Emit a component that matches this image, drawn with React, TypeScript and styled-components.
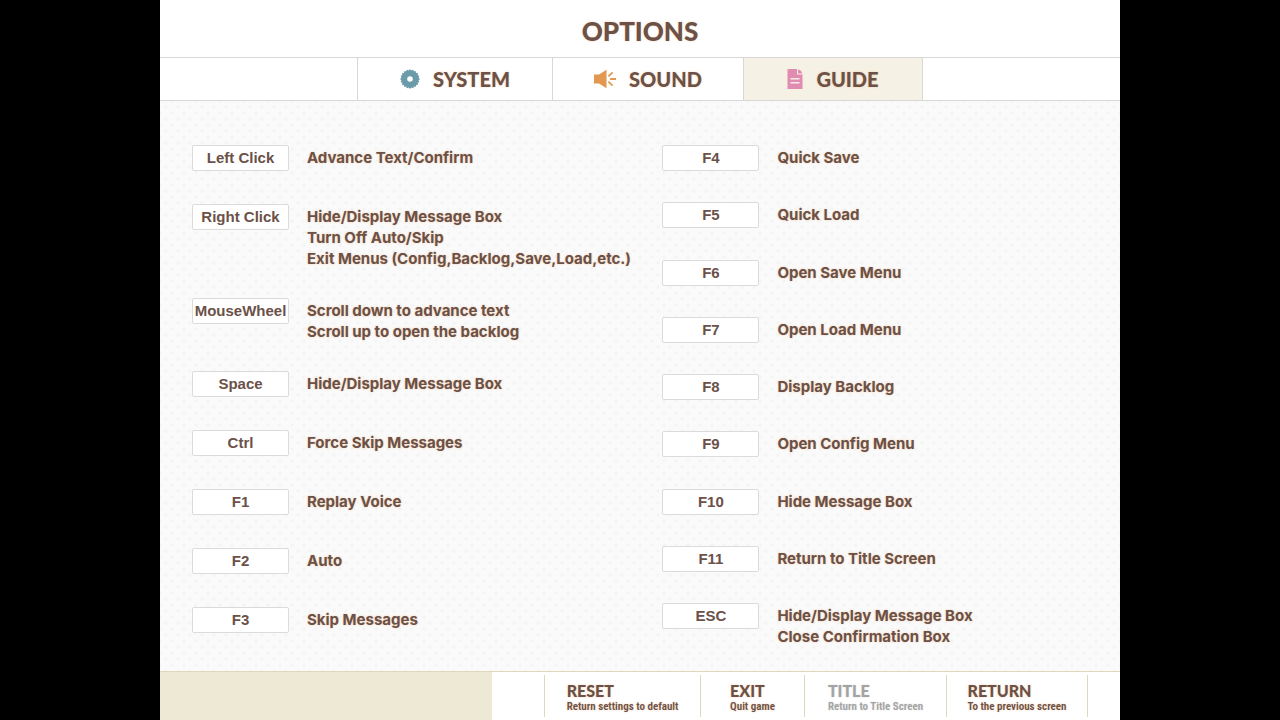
import React from "react";
import styled, { createGlobalStyle } from "styled-components";

const GlobalStyle = createGlobalStyle`
  *, *::before, *::after { box-sizing: border-box; }
  html, body { margin: 0; background: #000; }
  button { font: inherit; color: inherit; cursor: pointer; }
`;

const ink = "#6b5148";
const glow = "0 0 2px rgba(240, 170, 110, 0.6)";
const heading = `"Lato Black", Lato, "Open Sans", sans-serif`;

const Screen = styled.div`
  display: flex;
  flex-direction: column;
  width: 75%;
  min-height: 100vh;
  margin: 0 auto;
  background: #fff;
  color: ${ink};
`;

const Header = styled.header`
  display: flex;
  justify-content: center;
  padding: 16px 0 11px;
  border-bottom: 1px solid #d9d8d6;
`;

const PageTitle = styled.h1`
  margin: 0;
  font: 900 26px/30px ${heading};
  text-shadow: ${glow};
`;

const Tabs = styled.nav`
  display: flex;
  justify-content: center;
  border-bottom: 1px solid #d9d8d6;
`;

const Tab = styled.button<{ $width: number; $active?: boolean }>`
  display: flex;
  align-items: center;
  justify-content: center;
  gap: 13px;
  width: ${(p) => p.$width}px;
  height: 42px;
  padding: 0;
  border: 0;
  border-left: 1px solid #d9d8d6;
  background: ${(p) => (p.$active ? "#f5f1e5" : "#fff")};
  font: 900 20px/24px ${heading};
  text-shadow: ${glow};

  &:last-child { border-right: 1px solid #d9d8d6; }
`;

const Guide = styled.main`
  display: grid;
  grid-template-columns: 21fr 19fr;
  flex: 1;
  padding: 44px 32px 24px;
  background-color: #fafafa;
  background-image: radial-gradient(circle, #f3f4f4 1px, transparent 2px),
    radial-gradient(circle, #f3f4f4 1px, transparent 2px);
  background-size: 12px 12px;
  background-position: 0 0, 6px 6px;
`;

const KeyList = styled.dl<{ $spread?: boolean }>`
  display: flex;
  flex-direction: column;
  justify-content: ${(p) => (p.$spread ? "space-between" : "flex-start")};
  gap: ${(p) => (p.$spread ? 0 : 29)}px;
  min-width: 0;
  margin: 0;
`;

const KeyRow = styled.div`
  display: flex;
  align-items: flex-start;
  gap: 18px;
  min-height: 30px;
`;

const KeyCap = styled.dt`
  flex: none;
  width: 97px;
  height: 26px;
  border: 1px solid #dcdbda;
  border-radius: 2px;
  background: #fff;
  font: 700 15px/24px "Liberation Sans", sans-serif;
  text-align: center;
  white-space: nowrap;
`;

const KeyAction = styled.dd`
  margin: 0;
  padding-top: 2px;
  font: 700 15px/21px Inter, sans-serif;
  text-shadow: ${glow};
  white-space: nowrap;
`;

const Line = styled.span`
  display: block;
`;

const Footer = styled.footer`
  display: flex;
  border-top: 1px solid #e0d8ba;
`;

const FooterFill = styled.div`
  flex: 1;
  background: #eee9d5;
`;

const Actions = styled.div`
  display: flex;
  padding: 3px 32px 3px 52px;
`;

const Action = styled.button<{ $width: number }>`
  display: flex;
  flex-direction: column;
  align-items: center;
  width: ${(p) => p.$width}px;
  height: 42px;
  padding: 7px 0 0;
  border: 0;
  border-left: 1px solid #e0d8ba;
  background: none;
  text-align: left;
  white-space: nowrap;
  text-shadow: ${glow};

  &:last-child { border-right: 1px solid #e0d8ba; }
  &:disabled { color: #a3a3a3; text-shadow: 0 0 2px #dcdcdc; cursor: default; }
`;

const ActionName = styled.span`
  display: block;
  font: 900 16px/18px ${heading};
`;

const ActionHint = styled.span`
  display: block;
  font: 600 11px/14px "Roboto Condensed", Roboto, sans-serif;
`;

const teeth = Array.from({ length: 20 }, (_, i) => i * 18);

const GearIcon = () => (
  <svg width="20" height="20" viewBox="0 0 20 20" aria-hidden="true">
    <g fill="#6b9aa9">
      {teeth.map((a) => (
        <path key={a} d="M8.6 2 L9.3 0.5 H10.7 L11.4 2 Z" transform={`rotate(${a} 10 10)`} />
      ))}
      <path fillRule="evenodd" d="M10 1.5a8.5 8.5 0 1 0 0 17a8.5 8.5 0 1 0 0-17zM10 7.2a2.8 2.8 0 1 1 0 5.6a2.8 2.8 0 1 1 0-5.6z" />
    </g>
  </svg>
);

const SpeakerIcon = () => (
  <svg width="22" height="20" viewBox="0 0 22 20" aria-hidden="true">
    <path fill="#e2994f" d="M0 5.5H5L12.5 0.8V19.2L5 14.5H0Z" />
    <path stroke="#e2994f" strokeWidth="1.8" fill="none" d="M14.4 7.4L18.6 3.4M16 10H22M14.4 12.6L18.6 16.6" />
  </svg>
);

const PageIcon = () => (
  <svg width="16" height="20" viewBox="0 0 16 20" aria-hidden="true">
    <path fill="#e28bb0" d="M0.5 0H10V5.5H15.5V20H0.5Z" />
    <path fill="#e28bb0" d="M11 0.4Q14.6 0.8 15.2 4.5H11Z" />
    <path fill="#f8eee9" d="M3.5 9H12.5V10.6H3.5ZM3.5 13H12.5V14.6H3.5Z" />
  </svg>
);

type Entry = [string, string[]];

const leftKeys: Entry[] = [
  ["Left Click", ["Advance Text/Confirm"]],
  ["Right Click", ["Hide/Display Message Box", "Turn Off Auto/Skip", "Exit Menus (Config,Backlog,Save,Load,etc.)"]],
  ["MouseWheel", ["Scroll down to advance text", "Scroll up to open the backlog"]],
  ["Space", ["Hide/Display Message Box"]],
  ["Ctrl", ["Force Skip Messages"]],
  ["F1", ["Replay Voice"]],
  ["F2", ["Auto"]],
  ["F3", ["Skip Messages"]],
];

const rightKeys: Entry[] = [
  ["F4", ["Quick Save"]],
  ["F5", ["Quick Load"]],
  ["F6", ["Open Save Menu"]],
  ["F7", ["Open Load Menu"]],
  ["F8", ["Display Backlog"]],
  ["F9", ["Open Config Menu"]],
  ["F10", ["Hide Message Box"]],
  ["F11", ["Return to Title Screen"]],
  ["ESC", ["Hide/Display Message Box", "Close Confirmation Box"]],
];

const Keys = ({ entries, spread }: { entries: Entry[]; spread?: boolean }) => (
  <KeyList $spread={spread}>
    {entries.map(([key, lines]) => (
      <KeyRow key={key}>
        <KeyCap>{key}</KeyCap>
        <KeyAction>
          {lines.map((line) => (
            <Line key={line}>{line}</Line>
          ))}
        </KeyAction>
      </KeyRow>
    ))}
  </KeyList>
);

const actions = [
  { name: "RESET", hint: "Return settings to default", width: 156 },
  { name: "EXIT", hint: "Quit game", width: 104 },
  { name: "TITLE", hint: "Return to Title Screen", width: 142, disabled: true },
  { name: "RETURN", hint: "To the previous screen", width: 142 },
];

export default function App() {
  return (
    <>
      <GlobalStyle />
      <Screen>
        <Header>
          <PageTitle>OPTIONS</PageTitle>
        </Header>
        <Tabs aria-label="Options sections">
          <Tab type="button" $width={195}><GearIcon />SYSTEM</Tab>
          <Tab type="button" $width={191}><SpeakerIcon />SOUND</Tab>
          <Tab type="button" $width={180} $active aria-current="page"><PageIcon />GUIDE</Tab>
        </Tabs>
        <Guide>
          <Keys entries={leftKeys} />
          <Keys entries={rightKeys} spread />
        </Guide>
        <Footer>
          <FooterFill />
          <Actions>
            {actions.map((a) => (
              <Action key={a.name} type="button" $width={a.width} disabled={a.disabled}>
                <span>
                  <ActionName>{a.name}</ActionName>
                  <ActionHint>{a.hint}</ActionHint>
                </span>
              </Action>
            ))}
          </Actions>
        </Footer>
      </Screen>
    </>
  );
}
